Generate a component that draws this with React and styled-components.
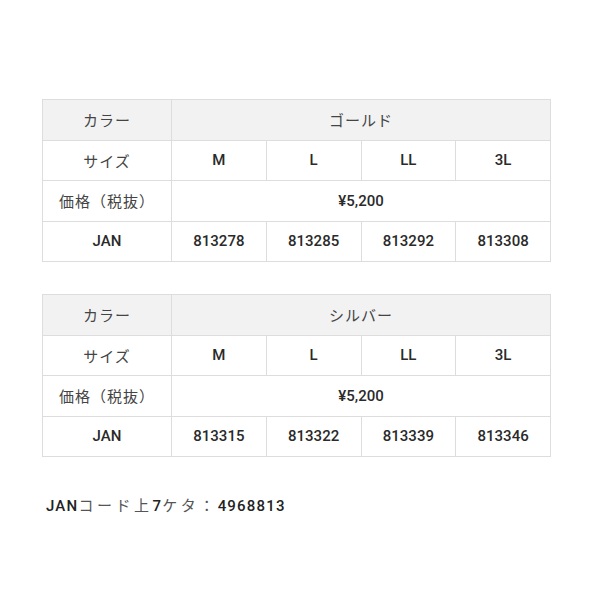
import React from "react";
import styled, { createGlobalStyle } from "styled-components";

const GlobalStyle = createGlobalStyle`
  body {
    margin: 0;
    background: #fff;
    font-family: Roboto, "Noto Sans CJK JP", sans-serif;
    color: #333;
  }
`;

const Page = styled.div`
  width: 600px;
  padding: 99px 0 0 42px;
  box-sizing: border-box;
  display: flex;
  flex-direction: column;
  gap: 32px;
`;

const Table = styled.table`
  width: 509px;
  border-collapse: collapse;
  table-layout: fixed;
  font-size: 15px;
`;

const Cell = styled.td`
  border: 1px solid #ddd;
  height: 39.5px;
  padding: 0;
  text-align: center;
  vertical-align: middle;
  background: ${(p) => (p.$head ? "#f2f2f2" : "#fff")};
  font-family: ${(p) =>
    p.$jp ? `"Noto Sans CJK JP", sans-serif` : `Roboto, "Noto Sans CJK JP", sans-serif`};
  font-weight: ${(p) => (p.$jp ? 400 : 500)};
  color: ${(p) => (p.$jp ? "#444" : "#2a2a2a")};
  letter-spacing: ${(p) => (p.$jp ? "1px" : "0")};
`;

const Note = styled.p`
  margin: 5px 0 0 4px;
  font-size: 15px;
  color: #222;
  font-family: Roboto, "Noto Sans CJK JP", sans-serif;
  font-weight: 500;
  letter-spacing: 1.2px;
`;

const Kana = styled.span`
  font-family: "Noto Sans CJK JP", sans-serif;
  font-weight: 400;
  color: #555;
  letter-spacing: 3.5px;
`;

const tables = [
  { color: "ゴールド", jan: ["813278", "813285", "813292", "813308"] },
  { color: "シルバー", jan: ["813315", "813322", "813339", "813346"] },
];

const sizes = ["M", "L", "LL", "3L"];

const SpecTable = ({ color, jan }) => (
  <Table>
    <colgroup>
      <col style={{ width: 129 }} />
      <col />
      <col />
      <col />
      <col />
    </colgroup>
    <tbody>
      <tr>
        <Cell $head $jp>カラー</Cell>
        <Cell $head $jp colSpan={4}>{color}</Cell>
      </tr>
      <tr>
        <Cell $jp>サイズ</Cell>
        {sizes.map((s) => (
          <Cell key={s}>{s}</Cell>
        ))}
      </tr>
      <tr>
        <Cell $jp>価格（税抜）</Cell>
        <Cell colSpan={4}>¥5,200</Cell>
      </tr>
      <tr>
        <Cell>JAN</Cell>
        {jan.map((j) => (
          <Cell key={j}>{j}</Cell>
        ))}
      </tr>
    </tbody>
  </Table>
);

export default function App() {
  return (
    <>
      <GlobalStyle />
      <Page>
        {tables.map((t) => (
          <SpecTable key={t.color} {...t} />
        ))}
        <Note>
          JAN<Kana>コード上</Kana>7<Kana>ケタ：</Kana>4968813
        </Note>
      </Page>
    </>
  );
}
